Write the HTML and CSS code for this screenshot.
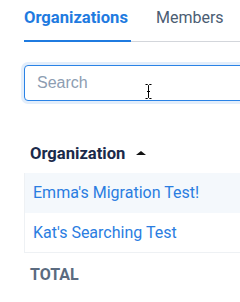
FILE: index.html
```html
<!DOCTYPE html>
<html lang="en">
<head>
    <meta charset="UTF-8">
    <meta name="viewport" content="width=device-width, initial-scale=1.0">
    <title>Organizations</title>
    <link rel="stylesheet" href="styles.css">
</head>
<body>
    <div class="container">
        <div class="tabs">
            <a href="#" class="tab active">Organizations</a>
            <a href="#" class="tab">Members</a>
        </div>

        <div class="search">
            <input type="text" class="search-input" placeholder="Search">
            <svg class="cursor" width="7" height="15" viewBox="0 0 7 15">
                <path d="M0.5 0.5h2l1 1 1-1h2M3.5 1.5v12M0.5 14.5h2l1-1 1 1h2M2 7.5h3" fill="none" stroke="#000" stroke-width="1"/>
            </svg>
        </div>

        <div class="table">
            <div class="table-head">
                <span>Organization</span>
                <span class="sort-arrow"></span>
            </div>
            <div class="row odd"><a href="#">Emma's Migration Test!</a></div>
            <div class="row"><a href="#">Kat's Searching Test</a></div>
            <div class="total">TOTAL</div>
        </div>
    </div>
</body>
</html>
```

FILE: styles.css
```css
* {
    margin: 0;
    padding: 0;
    box-sizing: border-box;
    font-family: Roboto, "Noto Sans", sans-serif;
}

body {
    background: #fff;
    overflow: hidden;
}

.container {
    width: 420px;
    padding-left: 24px;
}

.tabs {
    display: flex;
    gap: 25px;
    border-bottom: 1px solid #d3d6db;
}

.tab {
    padding: 8px 3px 12px 0;
    margin-bottom: -1px;
    font-size: 16px;
    line-height: 20px;
    color: #4b5d73;
    text-decoration: none;
    border-bottom: 2px solid transparent;
}

.tab.active {
    color: #1f7be0;
    font-size: 16.6px;
    font-weight: 700;
    border-bottom-color: #1f7be0;
}

.search {
    position: relative;
    margin-top: 23px;
}

.search-input {
    width: 100%;
    height: 36px;
    padding-left: 12px;
    border: 1px solid #2a83e6;
    border-radius: 4px;
    box-shadow: 0 0 0 3px #e3eefb;
    font-size: 16px;
    color: #1b2a4a;
    outline: none;
    font-family: "Liberation Sans", Arial, sans-serif;
}

.search-input::placeholder {
    color: #8d9db2;
}

.cursor {
    position: absolute;
    left: 121px;
    top: 19px;
}

.table {
    margin-top: 43px;
}

.table-head {
    display: flex;
    align-items: center;
    gap: 11px;
    padding: 0 0 9px 6px;
    font-size: 16.6px;
    line-height: 20px;
    font-weight: 700;
    color: #1b2a4a;
}

.sort-arrow {
    width: 0;
    height: 0;
    border-left: 5px solid transparent;
    border-right: 5px solid transparent;
    border-bottom: 4px solid #111;
    margin-top: -3px;
}

.row {
    padding: 10px 0 9px 8px;
    border-left: 1px solid #eef1f4;
    border-bottom: 1px solid #eef1f4;
    font-size: 16px;
    line-height: 20px;
}

.row.odd {
    background: #f4f8fc;
    border-bottom: none;
    padding-bottom: 10px;
}

.row a {
    color: #2a7de1;
    text-decoration: none;
}

.total {
    padding: 12px 0 0 6px;
    font-size: 16px;
    line-height: 20px;
    font-weight: 700;
    color: #5b6b80;
}
```
